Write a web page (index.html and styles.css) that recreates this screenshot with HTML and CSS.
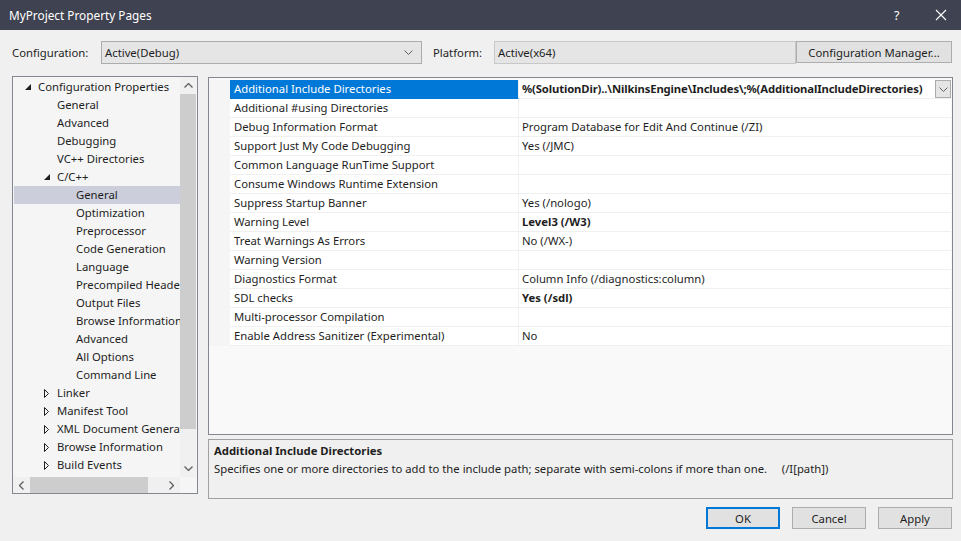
FILE: index.html
```html
<!DOCTYPE html>
<html lang="en">
<head>
  <meta charset="UTF-8" />
  <title>MyProject Property Pages</title>
  <link rel="stylesheet" href="styles.css">
</head>
<body>
  <div class="titlebar">
    <span class="title">MyProject Property Pages</span>
    <span class="help">?</span>
    <svg class="close" width="12" height="12" viewBox="0 0 12 12"><path d="M1 1L11 11M11 1L1 11" stroke="#fff" stroke-width="1.1"/></svg>
  </div>

  <div class="config-row">
    <span class="lbl lbl-config">Configuration:</span>
    <div class="combo combo-config">
      <span>Active(Debug)</span>
      <svg width="9" height="5" viewBox="0 0 9 5"><path d="M0.5 0.5L4.5 4.5L8.5 0.5" stroke="#606060" fill="none"/></svg>
    </div>
    <span class="lbl lbl-platform">Platform:</span>
    <div class="combo combo-platform"><span>Active(x64)</span></div>
    <button class="btn btn-manager">Configuration Manager...</button>
  </div>

  <div class="main">
    <div class="tree">
      <div class="tree-body">
        <div class="tree-rows">
          <div class="node lvl0"><svg class="exp" width="6" height="6" viewBox="0 0 6 6"><path d="M6 0L6 6L0 6Z" fill="#1e1e1e"/></svg>Configuration Properties</div>
          <div class="node lvl1">General</div>
          <div class="node lvl1">Advanced</div>
          <div class="node lvl1">Debugging</div>
          <div class="node lvl1">VC++ Directories</div>
          <div class="node lvl1"><svg class="exp" width="6" height="6" viewBox="0 0 6 6"><path d="M6 0L6 6L0 6Z" fill="#1e1e1e"/></svg>C/C++</div>
          <div class="node lvl2 selected">General</div>
          <div class="node lvl2">Optimization</div>
          <div class="node lvl2">Preprocessor</div>
          <div class="node lvl2">Code Generation</div>
          <div class="node lvl2">Language</div>
          <div class="node lvl2">Precompiled Headers</div>
          <div class="node lvl2">Output Files</div>
          <div class="node lvl2">Browse Information</div>
          <div class="node lvl2">Advanced</div>
          <div class="node lvl2">All Options</div>
          <div class="node lvl2">Command Line</div>
          <div class="node lvl1"><svg class="col" width="5" height="9" viewBox="0 0 5 9"><path d="M0.5 0.5L4.5 4.5L0.5 8.5Z" stroke="#1e1e1e" fill="none"/></svg>Linker</div>
          <div class="node lvl1"><svg class="col" width="5" height="9" viewBox="0 0 5 9"><path d="M0.5 0.5L4.5 4.5L0.5 8.5Z" stroke="#1e1e1e" fill="none"/></svg>Manifest Tool</div>
          <div class="node lvl1"><svg class="col" width="5" height="9" viewBox="0 0 5 9"><path d="M0.5 0.5L4.5 4.5L0.5 8.5Z" stroke="#1e1e1e" fill="none"/></svg>XML Document Generator</div>
          <div class="node lvl1"><svg class="col" width="5" height="9" viewBox="0 0 5 9"><path d="M0.5 0.5L4.5 4.5L0.5 8.5Z" stroke="#1e1e1e" fill="none"/></svg>Browse Information</div>
          <div class="node lvl1"><svg class="col" width="5" height="9" viewBox="0 0 5 9"><path d="M0.5 0.5L4.5 4.5L0.5 8.5Z" stroke="#1e1e1e" fill="none"/></svg>Build Events</div>
        </div>
        <div class="vscroll">
          <div class="arrow"><svg width="9" height="5" viewBox="0 0 9 5"><path d="M0.5 4.5L4.5 0.5L8.5 4.5" stroke="#606060" stroke-width="1.3" fill="none"/></svg></div>
          <div class="vthumb"></div>
          <div class="vtrack"></div>
          <div class="arrow"><svg width="9" height="5" viewBox="0 0 9 5"><path d="M0.5 0.5L4.5 4.5L8.5 0.5" stroke="#606060" stroke-width="1.3" fill="none"/></svg></div>
        </div>
      </div>
      <div class="hscroll">
        <div class="harrow"><svg width="5" height="9" viewBox="0 0 5 9"><path d="M4.5 0.5L0.5 4.5L4.5 8.5" stroke="#606060" stroke-width="1.3" fill="none"/></svg></div>
        <div class="hthumb"></div>
        <div class="htrack"></div>
        <div class="harrow"><svg width="5" height="9" viewBox="0 0 5 9"><path d="M0.5 0.5L4.5 4.5L0.5 8.5" stroke="#606060" stroke-width="1.3" fill="none"/></svg></div>
        <div class="corner"></div>
      </div>
    </div>

    <div class="right">
      <div class="grid">
        <div class="prop selected"><div class="gutter"></div><div class="name">Additional Include Directories</div><div class="value bold tight">%(SolutionDir)..\NilkinsEngine\Includes\;%(AdditionalIncludeDirectories)<span class="drop"><svg width="9" height="5" viewBox="0 0 9 5"><path d="M0.5 0.5L4.5 4.5L8.5 0.5" stroke="#606060" fill="none"/></svg></span></div></div>
        <div class="prop"><div class="gutter"></div><div class="name">Additional #using Directories</div><div class="value"></div></div>
        <div class="prop"><div class="gutter"></div><div class="name">Debug Information Format</div><div class="value">Program Database for Edit And Continue (/ZI)</div></div>
        <div class="prop"><div class="gutter"></div><div class="name">Support Just My Code Debugging</div><div class="value">Yes (/JMC)</div></div>
        <div class="prop"><div class="gutter"></div><div class="name">Common Language RunTime Support</div><div class="value"></div></div>
        <div class="prop"><div class="gutter"></div><div class="name">Consume Windows Runtime Extension</div><div class="value"></div></div>
        <div class="prop"><div class="gutter"></div><div class="name">Suppress Startup Banner</div><div class="value">Yes (/nologo)</div></div>
        <div class="prop"><div class="gutter"></div><div class="name">Warning Level</div><div class="value bold">Level3 (/W3)</div></div>
        <div class="prop"><div class="gutter"></div><div class="name">Treat Warnings As Errors</div><div class="value">No (/WX-)</div></div>
        <div class="prop"><div class="gutter"></div><div class="name">Warning Version</div><div class="value"></div></div>
        <div class="prop"><div class="gutter"></div><div class="name">Diagnostics Format</div><div class="value">Column Info (/diagnostics:column)</div></div>
        <div class="prop"><div class="gutter"></div><div class="name">SDL checks</div><div class="value bold">Yes (/sdl)</div></div>
        <div class="prop"><div class="gutter"></div><div class="name">Multi-processor Compilation</div><div class="value"></div></div>
        <div class="prop"><div class="gutter"></div><div class="name">Enable Address Sanitizer (Experimental)</div><div class="value">No</div></div>
      </div>
      <div class="desc">
        <div class="desc-title">Additional Include Directories</div>
        <div class="desc-text">Specifies one or more directories to add to the include path; separate with semi-colons if more than one.&nbsp;&nbsp;&nbsp;&nbsp;&nbsp;(/I[path])</div>
      </div>
    </div>
  </div>

  <div class="footer">
    <button class="btn btn-ok">OK</button>
    <button class="btn">Cancel</button>
    <button class="btn">Apply</button>
  </div>
</body>
</html>
```

FILE: styles.css
```css
body {
  margin: 0;
  width: 961px;
  height: 541px;
  overflow: hidden;
  background: #f0f0f0;
  color: #1e1e1e;
  font-family: "Noto Sans", "Segoe UI", sans-serif;
  font-size: 11.3px;
}
.titlebar {
  height: 30px;
  background: #3f4251;
  color: #fff;
  display: flex;
  align-items: center;
  padding-left: 9px;
}
.title {
  flex: 1;
  font-size: 11.8px;
}
.help {
  width: 14px;
  margin-right: 27px;
  font-size: 12.5px;
}
.close {
  margin-right: 14px;
}
.config-row {
  display: flex;
  align-items: center;
  height: 23px;
  margin-top: 11px;
  padding-left: 12px;
}
.lbl-config {
  width: 89px;
}
.combo {
  border: 1px solid #acacac;
  background: #e5e5e5;
  display: flex;
  align-items: center;
  justify-content: space-between;
  padding: 0 8px 0 3px;
  box-sizing: border-box;
  height: 23px;
}
.combo-config {
  width: 321px;
}
.lbl-platform {
  margin-left: 11px;
  width: 61px;
}
.combo-platform {
  width: 302px;
  border-color: #c8c8c8;
}
.btn {
  font-family: inherit;
  font-size: 11.3px;
  color: #1e1e1e;
  background: #e1e1e1;
  border: 1px solid #adadad;
  height: 22px;
  width: 74px;
  padding: 0;
}
.btn-manager {
  width: 156px;
  margin-bottom: 1px;
}
.main {
  display: flex;
  align-items: flex-start;
  margin-top: 12px;
  padding-left: 12px;
}
.tree {
  width: 186px;
  height: 418px;
  border: 1px solid #828790;
  box-sizing: border-box;
  background: #f5f5f5;
  display: flex;
  flex-direction: column;
}
.tree-body {
  flex: 1;
  display: flex;
  overflow: hidden;
}
.tree-rows {
  flex: 1;
  overflow: hidden;
  padding-top: 1px;
  white-space: nowrap;
}
.node {
  height: 18px;
  line-height: 18px;
  display: flex;
  align-items: center;
  margin-left: 1px;
}
.node svg {
  flex: none;
}
.lvl0 {
  padding-left: 11px;
}
.lvl0 .exp {
  margin-right: 7px;
}
.lvl1 {
  padding-left: 43px;
}
.lvl1 .exp {
  margin-left: -13px;
  margin-right: 7px;
}
.lvl1 .col {
  margin-left: -13px;
  margin-right: 8px;
}
.lvl2 {
  padding-left: 62px;
}
.node.selected {
  background: #cccedb;
}
.vscroll {
  width: 16px;
  margin-right: 1px;
  background: #f0f0f0;
  display: flex;
  flex-direction: column;
}
.arrow {
  height: 17px;
  display: flex;
  align-items: center;
  justify-content: center;
}
.vthumb {
  height: 335px;
  background: #cdcdcd;
}
.vtrack {
  flex: 1;
}
.hscroll {
  height: 16px;
  display: flex;
  background: #f0f0f0;
}
.harrow {
  width: 17px;
  display: flex;
  align-items: center;
  justify-content: center;
}
.hthumb {
  width: 118px;
  background: #cdcdcd;
}
.htrack {
  flex: 1;
}
.corner {
  width: 17px;
  background: #f5f5f5;
}
.right {
  margin-left: 10px;
  margin-top: 1px;
  width: 745px;
  display: flex;
  flex-direction: column;
  gap: 4px;
}
.grid {
  height: 358px;
  border: 1px solid #828790;
  box-sizing: border-box;
  background: #f9f9f9;
  padding: 2px 1px 0 0;
}
.prop {
  display: flex;
  height: 19px;
  line-height: 18px;
  white-space: nowrap;
}
.gutter {
  flex: none;
  width: 21px;
  background: #f5f5f5;
}
.name {
  flex: none;
  width: 284px;
  padding-left: 4px;
  background: #fff;
  border-bottom: 1px solid #f0f0f0;
  border-right: 1px solid #f0f0f0;
}
.value {
  flex: 1;
  min-width: 0;
  overflow: hidden;
  padding-left: 3px;
  background: #fff;
  border-bottom: 1px solid #f0f0f0;
  position: relative;
}
.bold {
  font-weight: bold;
}
.tight {
  letter-spacing: -0.14px;
}
.prop.selected .name {
  background: #0078d7;
  color: #fff;
  border-bottom-color: #0078d7;
}
.drop {
  position: absolute;
  right: 0;
  top: 0;
  width: 14px;
  height: 16px;
  border: 1px solid #acacac;
  background: #e5e5e5;
  display: flex;
  align-items: center;
  justify-content: center;
}
.desc {
  height: 60px;
  border: 1px solid #a0a0a0;
  box-sizing: border-box;
  padding: 2px 5px;
  line-height: 18px;
}
.desc-title {
  font-weight: bold;
}
.footer {
  display: flex;
  justify-content: flex-end;
  gap: 12px;
  margin-top: 8px;
  padding-right: 9px;
}
.btn-ok {
  border: 2px solid #0078d7;
}
```
